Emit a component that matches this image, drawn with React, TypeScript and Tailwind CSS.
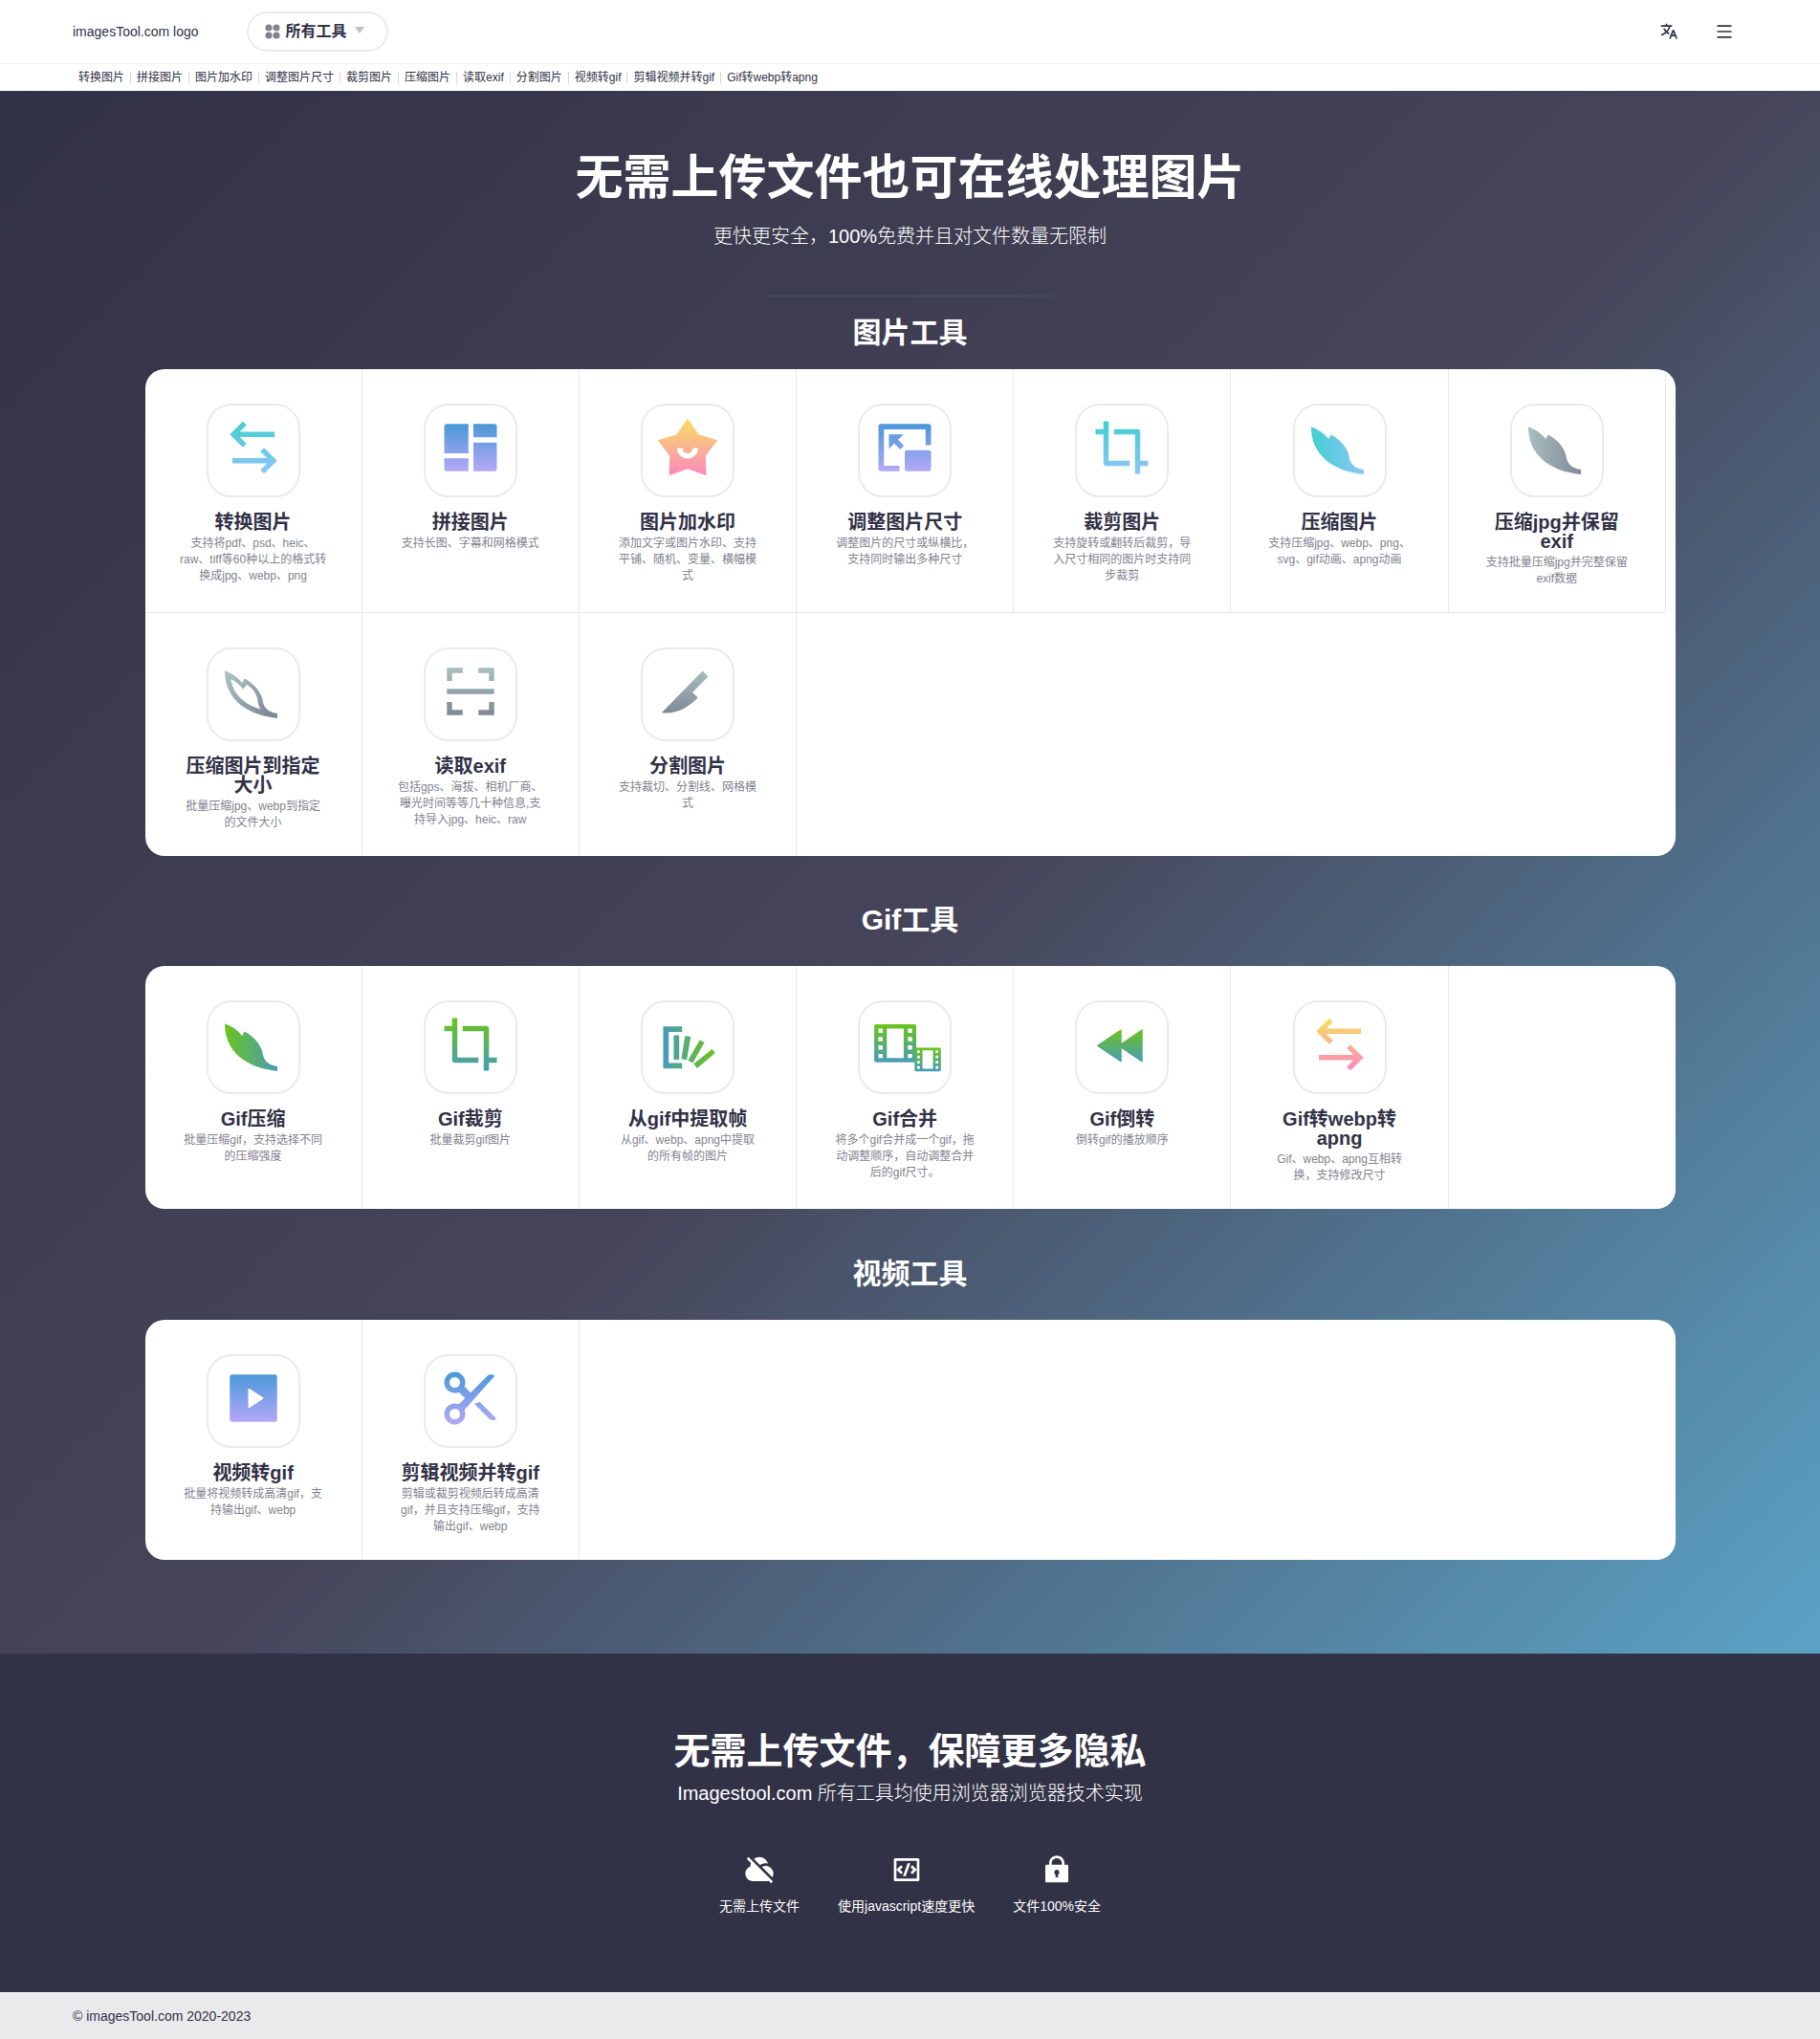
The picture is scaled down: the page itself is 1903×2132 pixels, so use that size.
import type { ReactNode } from 'react'
import {
  RiArrowLeftRightLine,
  RiCloudOffFill,
  RiCodeBoxLine,
  RiCropLine,
  RiLock2Fill,
  RiMenuLine,
  RiTranslate2,
} from 'react-icons/ri'

const gradients = [
  { id: 'teal', from: '#40d0d0', to: '#90c4f8' },
  { id: 'blue', from: '#4a98d8', to: '#b4a8f8' },
  { id: 'sunset', from: '#f6e05e', to: '#fc88c0' },
  { id: 'gray', from: '#a8bfbe', to: '#808898' },
  { id: 'green', from: '#6cc41c', to: '#489cb8' },
]

function Gradients() {
  return (
    <svg className="absolute h-0 w-0" aria-hidden="true">
      <defs>
        {gradients.map((g) => (
          <linearGradient key={g.id} id={g.id} x1="0" y1="0" x2="0" y2="1">
            <stop offset="0" stopColor={g.from} />
            <stop offset="1" stopColor={g.to} />
          </linearGradient>
        ))}
        {gradients.map((g) => (
          <linearGradient key={g.id} id={g.id + '-x'} x1="0" y1="0" x2="1" y2="0">
            <stop offset="0" stopColor={g.from} />
            <stop offset="1" stopColor={g.to} />
          </linearGradient>
        ))}
        <linearGradient id="gray-diagonal" x1="0" y1="0" x2="1" y2="1">
          <stop offset="0.1" stopColor="#a8bfbe" />
          <stop offset="0.9" stopColor="#808898" />
        </linearGradient>
        <linearGradient id="fan" gradientUnits="userSpaceOnUse" x1="3" y1="0" x2="22" y2="0">
          <stop offset="0" stopColor="#489cb8" />
          <stop offset="1" stopColor="#6cc41c" />
        </linearGradient>
      </defs>
    </svg>
  )
}

function Glyph({ d, fill }: { d: string; fill: string }) {
  return (
    <svg viewBox="0 0 24 24" className="size-[66px] overflow-visible" aria-hidden="true">
      <path d={d} fill={fill} fillRule="evenodd" />
    </svg>
  )
}

const leaf =
  'M1.1 4.1C3.6 5 6 6.6 7.7 8.7L8.6 7.1C12.3 8.9 15.3 12.7 15.6 15.9C16 18.2 18 20.1 21.1 20.3V22.2C9 21 1 14.5 1.1 4.1Z'
const leafHole =
  'M3.4 7.3C5.2 8.2 6.8 9.5 8.1 11.1L9.5 9.4C11.8 11 13.4 13 13.7 15.9C13.8 17 14.2 17.9 14.8 18.7C8.5 17 4.2 13 3.4 7.3Z'
const mosaic =
  'M2 4a1 1 0 0 1 1-1h8.2v11.2H2zM2 16.1h9.2V21H3a1 1 0 0 1-1-1zM13.1 3H21a1 1 0 0 1 1 1v4.1h-8.9zM13.1 10.1H22V20a1 1 0 0 1-1 1h-7.9z'
const star =
  'M12 .9l4.226 6.183 7.187 2.109-4.576 5.93.216 7.486L12 20.09l-7.053 2.518.216-7.486-4.576-5.93 7.187-2.109L12 .9zM10 12.2H8a4 4 0 0 0 7.995.2L16 12.2h-2a2 2 0 0 1-3.995.15L10 12.2z'
const resize =
  'M21 3a1 1 0 0 1 1 1v7.1h-2.1V5.1H4.1v13.8H10V21H3a1 1 0 0 1-1-1V4a1 1 0 0 1 1-1zM21 13a1 1 0 0 1 1 1v6a1 1 0 0 1-1 1h-8a1 1 0 0 1-1-1v-6a1 1 0 0 1 1-1zM11.5 7L9.457 9.043l2.25 2.25-1.414 1.414-2.25-2.25L6 12.5V7z'
const scan =
  'M21 16v5h-6v-2h4v-3zM5 16v3h4v2H3v-5zM21 11v2H3v-2zM9 3v2H5v3H3V3zM21 3v5h-2V5h-4V3z'
const knife = 'M17.7 4.2L19.8 6.4L13.8 12.4L15.9 14.4C12 18.4 7.5 20.8 2.1 20.1Z'
const fan =
  'M2.7 5.2h7.2v2.1H4.8v11.8h5.1v2.1H2.7zM6.7 8.5h2.1v9.3H6.7zM11 8.8l2.2.2-1.5 8.9-2.1-.4zM16.6 10.4l1.8.9-4.4 7.8-1.9-1zM21.3 13.8l1.2 1.5-6.9 5.8-1.3-1.7z'
const film =
  'M2 4a1 1 0 0 1 1-1h18a1 1 0 0 1 1 1v16a1 1 0 0 1-1 1H3a1 1 0 0 1-1-1zM8 5v14h8V5zM4 5v2h2V5zM4 9v2h2V9zM4 13v2h2v-2zM4 17v2h2v-2zM18 5v2h2V5zM18 9v2h2V9zM18 13v2h2v-2zM18 17v2h2v-2z'
const rewind =
  'M11.9 11.5L19.5 6.4q.4-.2.4.2v11.8q0 .4-.4.2L11.9 13.5v4.9q0 .4-.4.2L2.7 12.7q-.3-.2 0-.4L11.5 6.4q.4-.2.4.2z'
const video =
  'M3 4a1 1 0 0 1 1-1h16a1 1 0 0 1 1 1v16a1 1 0 0 1-1 1H4a1 1 0 0 1-1-1zM10.622 8.415a.4.4 0 0 0-.622.332v6.506a.4.4 0 0 0 .622.332l4.879-3.252a.4.4 0 0 0 0-.666z'
const scissors =
  'M9.683 7.562L12 9.88l6.374-6.375a2 2 0 0 1 2.829 0L9.683 16.438a4 4 0 1 1-2.121-2.121L9.88 12 7.562 9.683a4 4 0 1 1 2.121-2.121zM6 8a2 2 0 1 0 0-4 2 2 0 0 0 0 4zm0 12a2 2 0 1 0 0-4 2 2 0 0 0 0 4zm9.535-6.587l6.375 6.376a2 2 0 0 1-2.829 0l-5.667-5.668z'

type Tool = { title: string; text: string; icon: ReactNode }

const imageTools: Tool[] = [
  {
    title: '转换图片',
    text: '支持将pdf、psd、heic、raw、tiff等60种以上的格式转换成jpg、webp、png',
    icon: <RiArrowLeftRightLine size={66} fill="url(#teal)" />,
  },
  { title: '拼接图片', text: '支持长图、字幕和网格模式', icon: <Glyph d={mosaic} fill="url(#blue)" /> },
  {
    title: '图片加水印',
    text: '添加文字或图片水印、支持平铺、随机、变量、横幅模式',
    icon: <Glyph d={star} fill="url(#sunset)" />,
  },
  {
    title: '调整图片尺寸',
    text: '调整图片的尺寸或纵横比，支持同时输出多种尺寸',
    icon: <Glyph d={resize} fill="url(#blue)" />,
  },
  {
    title: '裁剪图片',
    text: '支持旋转或翻转后裁剪，导入尺寸相同的图片时支持同步裁剪',
    icon: <RiCropLine size={66} fill="url(#teal)" />,
  },
  {
    title: '压缩图片',
    text: '支持压缩jpg、webp、png、svg、gif动画、apng动画',
    icon: <Glyph d={leaf} fill="url(#teal-x)" />,
  },
  {
    title: '压缩jpg并保留exif',
    text: '支持批量压缩jpg并完整保留exif数据',
    icon: <Glyph d={leaf} fill="url(#gray-x)" />,
  },
  {
    title: '压缩图片到指定大小',
    text: '批量压缩jpg、webp到指定\n的文件大小',
    icon: <Glyph d={leaf + leafHole} fill="url(#gray-diagonal)" />,
  },
  {
    title: '读取exif',
    text: '包括gps、海拔、相机厂商、曝光时间等等几十种信息,支持导入jpg、heic、raw',
    icon: <Glyph d={scan} fill="url(#gray)" />,
  },
  { title: '分割图片', text: '支持裁切、分割线、网格模式', icon: <Glyph d={knife} fill="url(#gray)" /> },
]

const gifTools: Tool[] = [
  {
    title: 'Gif压缩',
    text: '批量压缩gif，支持选择不同的压缩强度',
    icon: <Glyph d={leaf} fill="url(#green-x)" />,
  },
  { title: 'Gif裁剪', text: '批量裁剪gif图片', icon: <RiCropLine size={66} fill="url(#green)" /> },
  {
    title: '从gif中提取帧',
    text: '从gif、webp、apng中提取\n的所有帧的图片',
    icon: <Glyph d={fan} fill="url(#fan)" />,
  },
  {
    title: 'Gif合并',
    text: '将多个gif合并成一个gif，拖动调整顺序，自动调整合并后的gif尺寸。',
    icon: (
      <svg viewBox="0 0 24 24" className="size-[66px] overflow-visible" aria-hidden="true">
        <path d={film} fill="url(#green)" fillRule="evenodd" transform="translate(-1.2 2) scale(.8)" />
        <path d={film} fill="url(#green)" fillRule="evenodd" transform="translate(14.75 11.8) scale(.5)" />
      </svg>
    ),
  },
  { title: 'Gif倒转', text: '倒转gif的播放顺序', icon: <Glyph d={rewind} fill="url(#green)" /> },
  {
    title: 'Gif转webp转apng',
    text: 'Gif、webp、apng互相转换，支持修改尺寸',
    icon: <RiArrowLeftRightLine size={66} fill="url(#sunset)" />,
  },
]

const videoTools: Tool[] = [
  {
    title: '视频转gif',
    text: '批量将视频转成高清gif，支持输出gif、webp',
    icon: <Glyph d={video} fill="url(#blue)" />,
  },
  {
    title: '剪辑视频并转gif',
    text: '剪辑或裁剪视频后转成高清gif，并且支持压缩gif，支持输出gif、webp',
    icon: <Glyph d={scissors} fill="url(#blue)" />,
  },
]

const links = [
  '转换图片',
  '拼接图片',
  '图片加水印',
  '调整图片尺寸',
  '裁剪图片',
  '压缩图片',
  '读取exif',
  '分割图片',
  '视频转gif',
  '剪辑视频并转gif',
  'Gif转webp转apng',
]

const features = [
  { label: '无需上传文件', icon: <RiCloudOffFill size={32} /> },
  { label: '使用javascript速度更快', icon: <RiCodeBoxLine size={32} /> },
  { label: '文件100%安全', icon: <RiLock2Fill size={32} /> },
]

function ToolCard({ tools }: { tools: Tool[] }) {
  return (
    <div className="mx-auto w-full max-w-[1600px] overflow-hidden rounded-[20px] bg-white">
      <ul className="-mb-px flex flex-wrap">
        {tools.map((tool) => (
          <li key={tool.title} className="w-[14.2%] border-r border-b border-[#e9e9eb]">
            <a href="#" className="flex h-full flex-col items-center px-9 pt-9 pb-[26px] text-center">
              <span className="flex size-[98px] justify-center rounded-[26px] border-2 border-[#ebebec] pt-[11px]">
                {tool.icon}
              </span>
              <h3 className="mt-4 text-xl leading-5 font-bold">{tool.title}</h3>
              <p className="mt-1 text-xs leading-[17px] whitespace-pre-line text-[#84828f]">{tool.text}</p>
            </a>
          </li>
        ))}
      </ul>
    </div>
  )
}

export default function App() {
  return (
    <div className="bg-[#323247] font-['Liberation_Sans','Noto_Sans_CJK_SC',sans-serif] text-[#323247]">
      <Gradients />
      <header className="bg-white">
        <div className="flex h-[67px] items-center border-b border-[#efeff0] px-[76px]">
          <a href="#" className="text-sm">
            imagesTool.com logo
          </a>
          <button
            type="button"
            className="ml-[50px] flex h-[42px] items-center rounded-[21px] border-2 border-[#ebebec] pr-[23px] pl-[17px] text-base font-bold"
          >
            <svg viewBox="0 0 16 16" className="mr-1.5 size-4 fill-[#84828f]" aria-hidden="true">
              <circle cx="4" cy="4" r="3.6" />
              <circle cx="12" cy="4" r="3.6" />
              <circle cx="4" cy="12" r="3.6" />
              <circle cx="12" cy="12" r="3.6" />
            </svg>
            所有工具
            <svg viewBox="0 0 10 7" className="mb-1 ml-2 h-[7px] w-2.5 fill-[#c0bfc6]" aria-hidden="true">
              <path d="M0 0h10L5 7z" />
            </svg>
          </button>
          <div className="ml-auto flex items-center gap-[38px] pr-3.5">
            <button type="button" aria-label="语言">
              <RiTranslate2 size={20} />
            </button>
            <button type="button" aria-label="菜单">
              <RiMenuLine size={20} />
            </button>
          </div>
        </div>
        <nav className="flex h-7 items-center px-[76px] text-xs">
          {links.map((link, i) => (
            <a
              key={link}
              href="#"
              className={i ? 'border-l border-[#d4d4da] px-1.5 leading-3' : 'px-1.5 leading-3'}
            >
              {link}
            </a>
          ))}
        </nav>
      </header>

      <main className="bg-[linear-gradient(135deg,#323247,#464458_52%,#5ba3c6)] px-4 pb-[98px] text-center">
        <h1 className="pt-[61px] text-[50px] leading-[60px] font-bold text-white">
          无需上传文件也可在线处理图片
        </h1>
        <p className="mt-4 text-xl leading-[30px] font-light text-white">
          更快更安全，100%免费并且对文件数量无限制
        </p>
        <hr className="mx-auto mt-[47px] w-[300px] border-[#43506a]" />
        <h2 className="mt-[18px] mb-[18px] text-[30px] leading-10 font-bold text-white">图片工具</h2>
        <ToolCard tools={imageTools} />
        <h2 className="mt-[47px] mb-7 text-[30px] leading-10 font-bold text-white">Gif工具</h2>
        <ToolCard tools={gifTools} />
        <h2 className="mt-12 mb-7 text-[30px] leading-10 font-bold text-white">视频工具</h2>
        <ToolCard tools={videoTools} />
      </main>

      <section className="px-4 pt-[77px] pb-20 text-center text-white">
        <h2 className="text-[38px] leading-[50px] font-bold">无需上传文件，保障更多隐私</h2>
        <p className="mt-1 text-xl leading-[30px] font-light">
          Imagestool.com 所有工具均使用浏览器浏览器技术实现
        </p>
        <ul className="mt-[49px] flex flex-wrap justify-center gap-10">
          {features.map((f) => (
            <li key={f.label} className="flex flex-col items-center gap-3 text-sm">
              {f.icon}
              <span>{f.label}</span>
            </li>
          ))}
        </ul>
      </section>

      <footer className="flex h-[49px] items-center bg-[#eaeaec] px-[76px] text-sm">
        © imagesTool.com 2020-2023
      </footer>
    </div>
  )
}
